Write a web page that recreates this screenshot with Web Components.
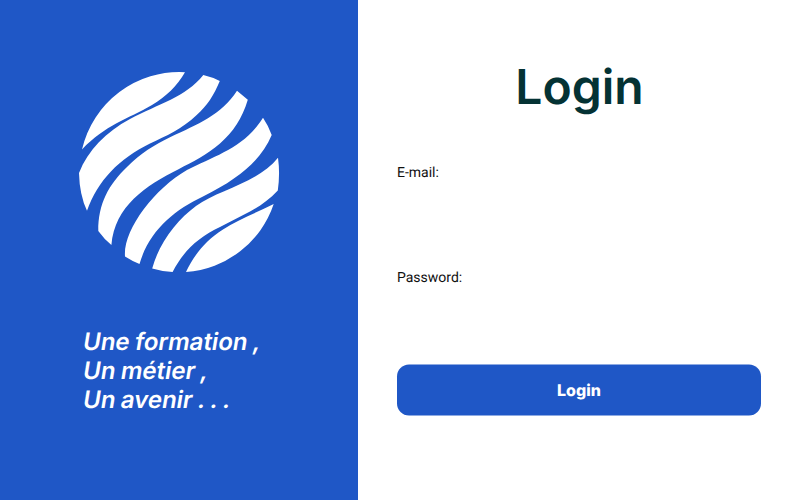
<!DOCTYPE html>
<html lang="fr">
<head>
<meta charset="utf-8">
<title>Login</title>
<style>
html, body { margin: 0; height: 100%; background: #fff; }
body { text-rendering: geometricPrecision; font-optical-sizing: none; }
</style>
</head>
<body>
<login-page></login-page>
<script>
const define = (name, html) => {
  const t = document.createElement('template');
  t.innerHTML = html;
  customElements.define(name, class extends HTMLElement {
    constructor() {
      super();
      this.attachShadow({ mode: 'open' }).append(t.content.cloneNode(true));
    }
  });
};

define('globe-logo', `
<style>:host { display: block; width: 202px; height: 202px; } svg { display: block; }</style>
<svg width="202" height="202" viewBox="78 71 202 202" fill="#fff" aria-hidden="true">
  <path d="M82 149.5 A100 100 0 0 1 185 72.2 C177 86 166 96.500 152 105 C128 119 105 125 82 149.5Z"/>
  <path d="M203.3 75 Q212 77 219.8 81 C214 95 207 106 196.7 115 C182 129 166 136 150 143.500 C119 159 98 180 87 210.8 Q79.5 195 79 173 C88 150 106 132 130 119 C158 104 186 97 203.3 75Z"/>
  <path d="M237 90.7 L247.8 99.8 C242 119 233 132 220 143.5 C207 155 192 162 179 169 C145 186 115 206 111.4 245 Q104 239 98.3 231 C98 204 109 184 127 167 C141 153 154 145 170 137.2 C198 124 221 115 237 90.7Z"/>
  <path d="M263 117.8 Q268.5 126 271.7 135 C261 160 240 178 203 196.5 C174 210 149 231 139.5 264 Q132 261 125 256.5 C123 230 154 189 187 170 C215 155.5 244 148 263 117.8Z"/>
  <path d="M278 157.8 Q280.2 174 277.8 190.5 C269 200 260 206 250 211.5 L220 227 C199 237 184 250 172.6 272 Q162 271.5 152.2 268.5 C159 243 177 220 196 206 C218 190 258 183 278 157.8Z"/>
  <path d="M273.7 204 A100 100 0 0 1 186 272 C194 255 206 240 223 229.5 C237 220 256 213 273.7 204Z"/>
</svg>`);

define('motto-line', `
<style>:host { display: block; width: max-content; word-spacing: -0.7px; transform: skewX(-9.4deg); transform-origin: 0 23px; }</style>
<slot></slot>`);

define('brand-panel', `
<style>
:host { display: flex; flex-direction: column; align-items: center; box-sizing: border-box;
  padding-top: 71px; background: #1f57c6; color: #fff; }
.motto { align-self: flex-start; margin: 54px 0 0 82px; font: 600 24px/29px Inter, sans-serif; }
</style>
<globe-logo></globe-logo>
<div class="motto"><slot></slot></div>`);

define('field-label', `
<style>:host { display: block; font: 400 14px/16px Roboto, sans-serif; color: #111; }</style>
<slot></slot>`);

define('primary-button', `
<style>
:host { display: block; }
button { display: block; width: 100%; height: 51px; padding: 0 0 2px; border: 0; border-radius: 12px;
  background: #1f57c6; color: #fff; font: 800 16px/20px Inter, sans-serif; text-rendering: inherit;
  font-optical-sizing: inherit; transform: translateY(-0.5px); }
</style>
<button type="button"><slot></slot></button>`);

define('login-form', `
<style>
:host { display: flex; flex-direction: column; box-sizing: border-box; padding: 58px 39px 0; background: #fff; }
h1 { margin: 0; padding-left: 1px; text-align: center; font: 600 48px/58px Inter, sans-serif; color: #043234; }
.email { margin-top: 49px; }
.password { margin-top: 89px; }
primary-button { margin-top: 79px; }
</style>
<h1>Login</h1>
<field-label class="email">E-mail:</field-label>
<field-label class="password">Password:</field-label>
<primary-button>Login</primary-button>`);

define('login-page', `
<style>:host { display: grid; grid-template-columns: 358px 1fr; height: 500px; overflow: hidden; }</style>
<brand-panel>
  <motto-line>Une formation ,</motto-line>
  <motto-line>Un métier ,</motto-line>
  <motto-line>Un avenir . . .</motto-line>
</brand-panel>
<login-form></login-form>`);
</script>
</body>
</html>
